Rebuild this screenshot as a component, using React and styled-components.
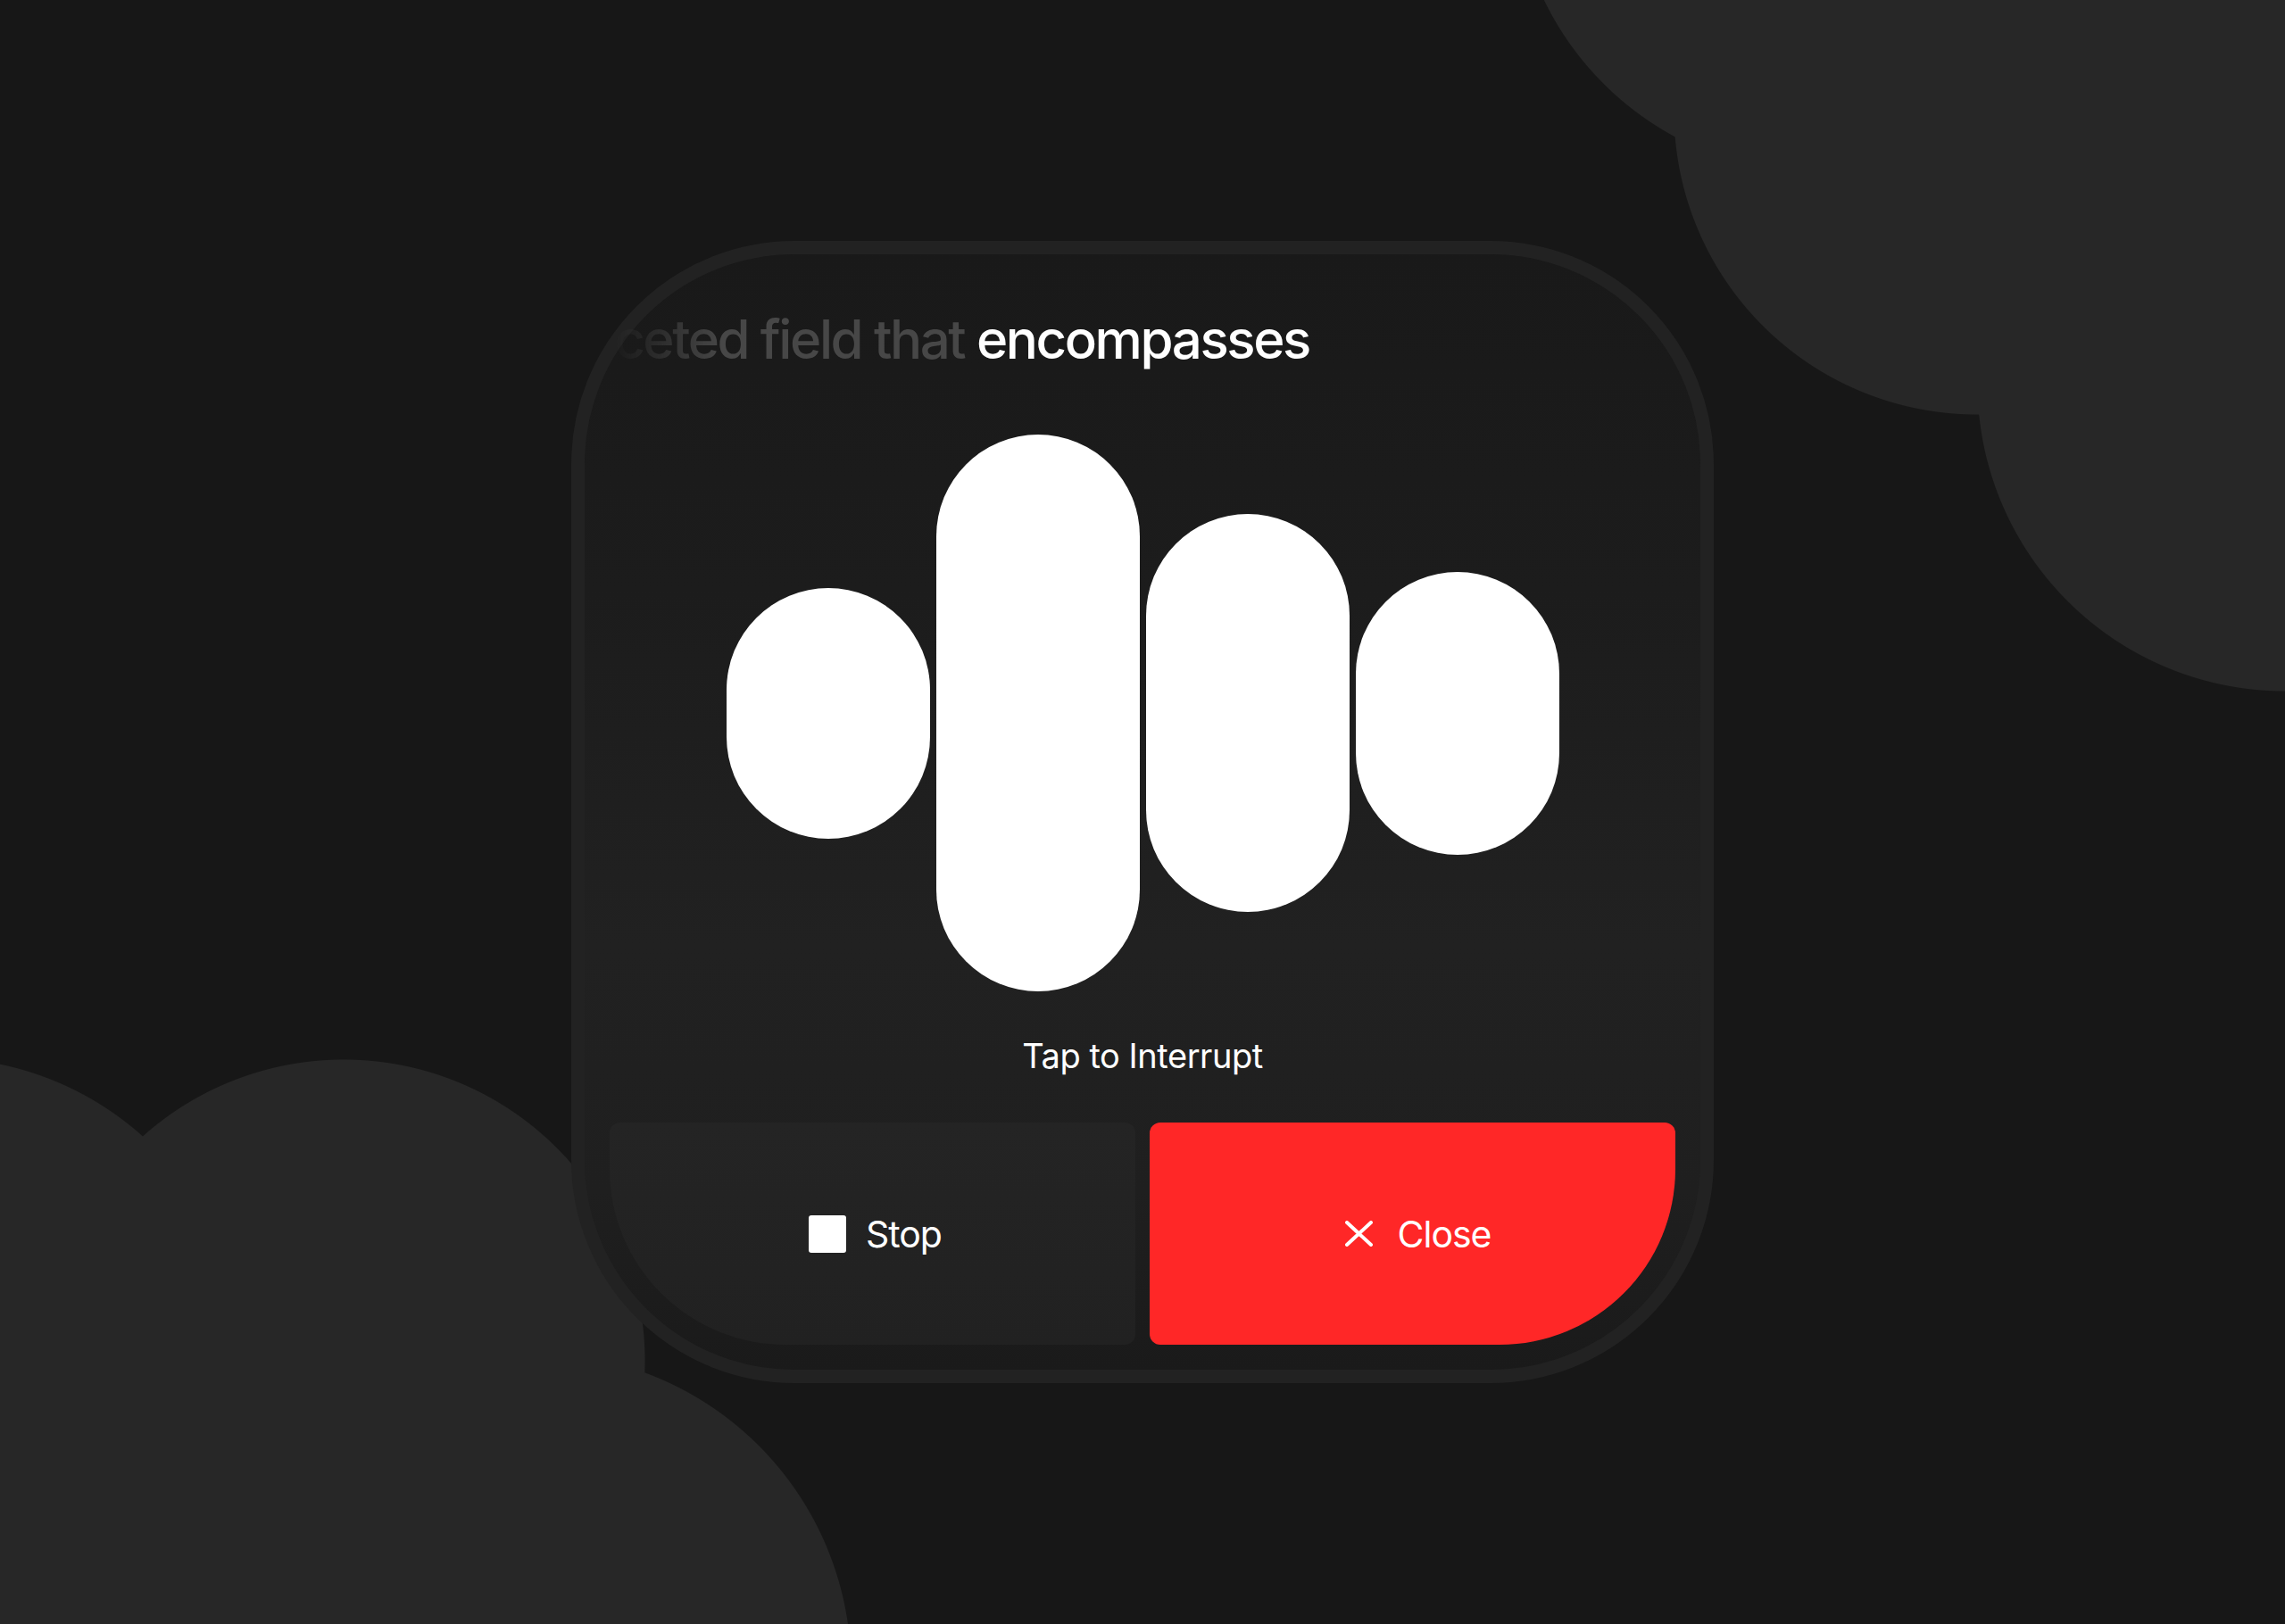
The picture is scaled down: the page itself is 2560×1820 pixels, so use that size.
import styled, { createGlobalStyle } from "styled-components";

const GlobalStyle = createGlobalStyle`
  html,
  body {
    margin: 0;
    padding: 0;
    background: #171717;
  }

  body {
    font-family: "Inter", "Noto Sans", sans-serif;
    -webkit-font-smoothing: antialiased;
  }

  *,
  *::before,
  *::after {
    box-sizing: border-box;
  }
`;

const blob = (x, y, r) =>
  `radial-gradient(circle at ${x}px ${y}px, #272727 ${r - 1}px, transparent ${r}px)`;

const Page = styled.main`
  min-height: 100vh;
  display: flex;
  align-items: center;
  justify-content: center;
  background-color: #171717;
  background-repeat: no-repeat;
  background-image: ${[
    blob(2040, -150, 345),
    blob(2215, 125, 340),
    blob(2560, 430, 345),
    blob(2560, 0, 350),
    blob(-70, 1530, 345),
    blob(385, 1525, 338),
    blob(600, 1870, 354),
    blob(150, 1840, 320),
  ].join(",")};
`;

const Card = styled.section`
  width: 1280px;
  height: 1280px;
  border: 15px solid #222222;
  border-radius: 250px;
  padding: 58px 28px 28px;
  display: flex;
  flex-direction: column;
  background: linear-gradient(
    180deg,
    #191919 0%,
    #1c1c1c 30%,
    #212121 62%,
    #1f1f1f 84%,
    #1a1a1a 100%
  );
`;

const Transcript = styled.div`
  width: 784px;
  height: 74px;
  display: flex;
  justify-content: flex-end;
  overflow: hidden;
  white-space: nowrap;
  font-size: 60px;
  line-height: 74px;
  font-weight: 500;
  letter-spacing: -0.04em;
  -webkit-mask-image: linear-gradient(90deg, transparent 4px, #000 125px);
  mask-image: linear-gradient(90deg, transparent 4px, #000 125px);
`;

const Words = styled.span`
  flex-shrink: 0;
  color: ${({ $current }) => ($current ? "#ffffff" : "#474747")};
`;

const Wave = styled.div`
  height: 624px;
  margin-top: 70px;
  display: flex;
  align-items: center;
  justify-content: center;
  gap: 7px;
`;

const Bar = styled.div`
  width: 228px;
  height: ${({ $h }) => $h}px;
  border-radius: 114px;
  background: #ffffff;
`;

const Hint = styled.p`
  margin: 49px 0 0;
  font-size: 38px;
  line-height: 46px;
  letter-spacing: -0.012em;
  color: #ffffff;
  text-align: center;
`;

const Actions = styled.div`
  margin-top: 52px;
  height: 249px;
  display: grid;
  grid-template-columns: 1fr 1fr;
  gap: 16px;
`;

const ActionButton = styled.button`
  border: none;
  padding: 0 0 0 ${({ $danger }) => ($danger ? "12px" : "6px")};
  display: flex;
  align-items: center;
  justify-content: center;
  gap: ${({ $danger }) => ($danger ? "28px" : "22px")};
  font-family: inherit;
  font-size: 41px;
  line-height: 50px;
  letter-spacing: -0.025em;
  color: #ffffff;
  cursor: pointer;
  background: ${({ $danger }) =>
    $danger ? "#ff2727" : "linear-gradient(180deg, #242424, #212121)"};
  border-radius: ${({ $danger }) =>
    $danger ? "12px 12px 197px 12px" : "12px 12px 12px 197px"};
`;

const StopSquare = styled.span`
  width: 42px;
  height: 42px;
  border-radius: 3px;
  background: #ffffff;
`;

const CloseIcon = () => (
  <svg width="31" height="29" viewBox="0 0 31 29" fill="none">
    <path
      d="M2 2 L29 27 M29 2 L2 27"
      stroke="#ffffff"
      strokeWidth="4"
      strokeLinecap="round"
    />
  </svg>
);

const bars = [281, 624, 446, 317];

export default function App() {
  return (
    <>
      <GlobalStyle />
      <Page>
        <Card>
          <Transcript>
            <Words>is a multifaceted field that&nbsp;</Words>
            <Words $current>encompasses</Words>
          </Transcript>

          <Wave>
            {bars.map((h, i) => (
              <Bar key={i} $h={h} />
            ))}
          </Wave>

          <Hint>Tap to Interrupt</Hint>

          <Actions>
            <ActionButton>
              <StopSquare />
              Stop
            </ActionButton>
            <ActionButton $danger>
              <CloseIcon />
              Close
            </ActionButton>
          </Actions>
        </Card>
      </Page>
    </>
  );
}
